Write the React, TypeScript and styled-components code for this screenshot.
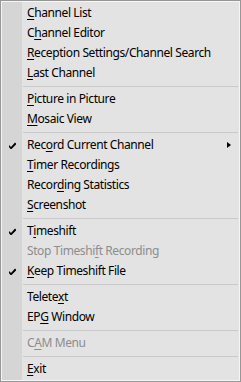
import {Fragment} from 'react';
import styled, {createGlobalStyle} from 'styled-components';

const GlobalStyle = createGlobalStyle`
html, body {
    margin: 0;
    padding: 0;
    background: #ffffff;
}
`

const Menu = styled.div`
display: flex;
flex-direction: column;
box-sizing: border-box;
width: 241px;
height: 382px;
padding: 2px 1px;
border: 1px solid #979797;
box-shadow: inset 0 0 0 1px #f5f5f5;
background: linear-gradient(to right, #f5f5f5 1px, #d5d5d5 1px, #d5d5d5 21px, #e3e3e3 21px);
font-family: "Noto Sans", "Liberation Sans", sans-serif;
font-size: 12px;
letter-spacing: -0.4px;
color: #000000;
`

const Row = styled.div<{$disabled?: boolean}>`
display: flex;
align-items: center;
height: 20px;
flex-shrink: 0;
color: ${(props) => (props.$disabled ? '#8d8d8d' : '#000000')};
`

const CheckCell = styled.div`
display: flex;
align-items: center;
justify-content: center;
width: 20px;
height: 20px;
`

const Label = styled.span`
flex: 1;
margin-left: 5px;
white-space: nowrap;
line-height: 20px;
`

const Key = styled.span`
text-decoration: underline;
text-underline-offset: 2px;
text-decoration-thickness: 1px;
`

const Arrow = styled.div`
width: 0;
height: 0;
margin-right: 8px;
border-top: 3.5px solid transparent;
border-bottom: 3.5px solid transparent;
border-left: 4px solid #000000;
`

const Separator = styled.div`
flex-shrink: 0;
height: 6px;
margin-left: 21px;
margin-right: 1px;
display: flex;
flex-direction: column;

&::before {
    content: '';
    display: block;
    margin-top: 3px;
    height: 1px;
    background: #cacaca;
}
`

type Item = {
    label: string;
    key: number;
    checked?: boolean;
    disabled?: boolean;
    sub?: boolean;
}

const groups: Item[][] = [
    [
        {label: 'Channel List', key: 0},
        {label: 'Channel Editor', key: 1},
        {label: 'Reception Settings/Channel Search', key: 0},
        {label: 'Last Channel', key: 0},
    ],
    [
        {label: 'Picture in Picture', key: 0},
        {label: 'Mosaic View', key: 0},
    ],
    [
        {label: 'Record Current Channel', key: 3, checked: true, sub: true},
        {label: 'Timer Recordings', key: 0},
        {label: 'Recording Statistics', key: 5},
        {label: 'Screenshot', key: 0},
    ],
    [
        {label: 'Timeshift', key: 1, checked: true},
        {label: 'Stop Timeshift Recording', key: 12, disabled: true},
        {label: 'Keep Timeshift File', key: 0, checked: true},
    ],
    [
        {label: 'Teletext', key: 6},
        {label: 'EPG Window', key: 2},
    ],
    [
        {label: 'CAM Menu', key: 1, disabled: true},
    ],
    [
        {label: 'Exit', key: 0},
    ],
]

function Check(): JSX.Element {
    return (
        <svg width="7" height="7" viewBox="0 0 7 7">
            <path d="M0 3 L2 5 L6 0.5 L7 1.5 L7 2.5 L2.5 7 L1.5 7 L0 5 Z" fill="#000000" />
        </svg>
    )
}

function MenuRow({item}: {item: Item}): JSX.Element {
    const before = item.label.slice(0, item.key)
    const ch = item.label.charAt(item.key)
    const after = item.label.slice(item.key + 1)
    return (
        <Row $disabled={item.disabled}>
            <CheckCell>{item.checked && <Check />}</CheckCell>
            <Label>
                {before}<Key>{ch}</Key>{after}
            </Label>
            {item.sub && <Arrow />}
        </Row>
    )
}

function App(): JSX.Element {
    return (
        <>
            <GlobalStyle />
            <Menu>
                {groups.map((group, gi) => (
                    <Fragment key={gi}>
                        {gi > 0 && <Separator />}
                        {group.map((item) => (
                            <MenuRow key={item.label} item={item} />
                        ))}
                    </Fragment>
                ))}
            </Menu>
        </>
    )
}

export default App;
